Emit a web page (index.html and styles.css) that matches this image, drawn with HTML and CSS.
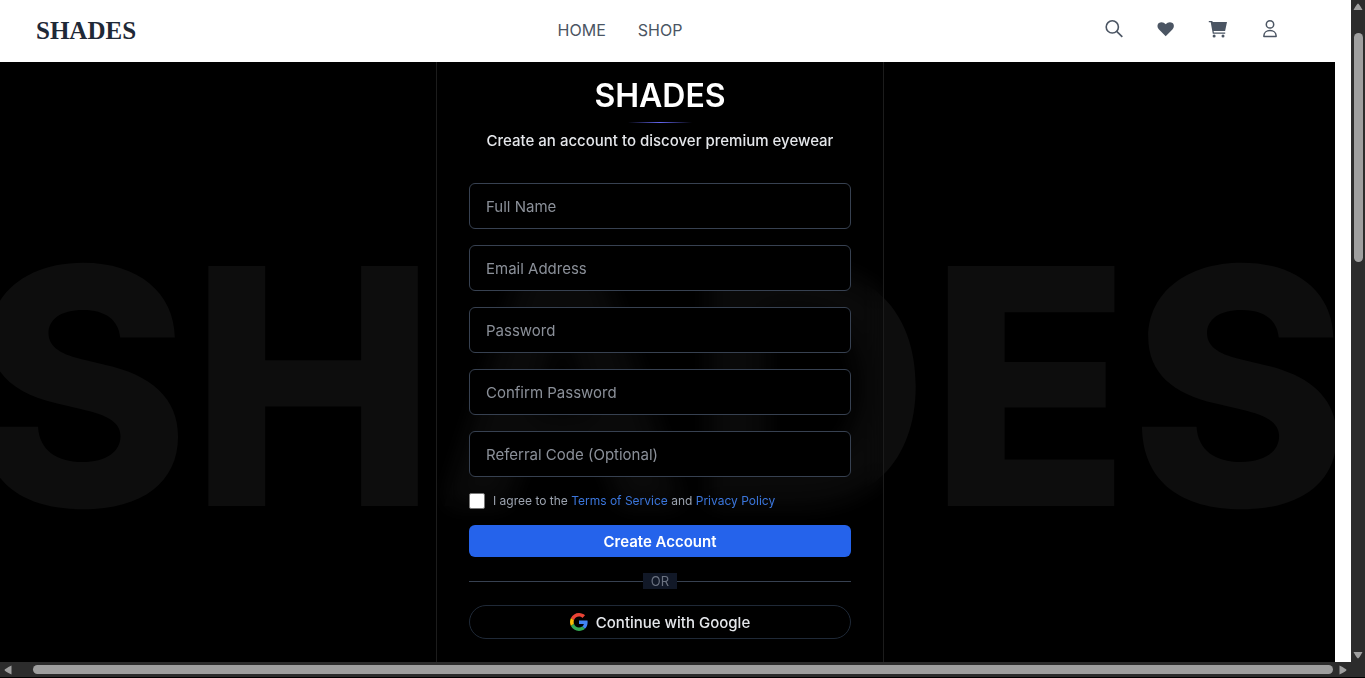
FILE: index.html
```html
<!DOCTYPE html>
<html lang="en">
<head>
<meta charset="utf-8">
<meta name="viewport" content="width=device-width, initial-scale=1">
<title>SHADES - Create Account</title>
<link rel="stylesheet" href="styles.css">
</head>
<body>
<div class="shell">
  <div class="page">
    <header class="nav">
      <a class="logo" href="#">SHADES</a>
      <nav class="nav-links">
        <a href="#">HOME</a>
        <a href="#">SHOP</a>
      </nav>
      <div class="nav-icons">
        <button type="button" aria-label="Search">
          <svg viewBox="0 0 20 20" fill="none" stroke="currentColor" stroke-width="1.6"><circle cx="8.300" cy="7.900" r="6.100"/><path d="M12.700 12.400l5.600 5.500"/></svg>
        </button>
        <a href="#" aria-label="Wishlist">
          <svg viewBox="0 0 20 20" fill="currentColor"><path d="M9.700 17.300l-6.700-6.700C.9 8.300 1.200 5.500 2.900 4.100 4.900 2.500 7.800 3 9.700 5.200c1.900-2.200 4.800-2.700 6.800-1.100 1.700 1.400 2 4.200-.1 6.500z"/></svg>
        </a>
        <a href="#" aria-label="Cart">
          <svg viewBox="0 0 20 20" fill="currentColor"><path d="M.8 2h3.500l.4 1h14.300l-1.900 9.100H5.600l.3 1.400h11.300v1.200H4.800L2.700 3.200H.8z"/><circle cx="6.100" cy="17" r="1.500"/><circle cx="15" cy="17" r="1.500"/></svg>
        </a>
        <a href="#" aria-label="Account">
          <svg viewBox="0 0 20 20" fill="none" stroke="currentColor" stroke-width="1.500"><circle cx="10" cy="5.400" r="3.700"/><path d="M3.900 17.500v-.8c0-3.100 2.600-5.100 6.100-5.100s6.100 2 6.100 5.100v.8z" stroke-linejoin="round"/></svg>
        </a>
      </div>
    </header>
    <main class="stage">
      <div class="watermark" aria-hidden="true">SHADES</div>
      <section class="card">
        <div class="heading">
          <h1>SHADES</h1>
          <div class="accent"></div>
          <p>Create an account to discover premium eyewear</p>
        </div>
        <form class="form">
          <input class="field" type="text" placeholder="Full Name" aria-label="Full Name">
          <input class="field" type="email" placeholder="Email Address" aria-label="Email Address">
          <input class="field" type="password" placeholder="Password" aria-label="Password">
          <input class="field" type="password" placeholder="Confirm Password" aria-label="Confirm Password">
          <input class="field" type="text" placeholder="Referral Code (Optional)" aria-label="Referral Code">
          <div class="terms">
            <input type="checkbox" id="agree">
            <label for="agree">I agree to the <a href="#">Terms of Service</a> and <a href="#">Privacy Policy</a></label>
          </div>
          <button class="submit" type="submit">Create Account</button>
          <div class="divider"><span>OR</span></div>
          <button class="google" type="button">
            <svg viewBox="0 0 48 48" aria-hidden="true"><path fill="#EA4335" d="M24 9.500c3.540 0 6.710 1.220 9.210 3.600l6.850-6.850C35.900 2.380 30.470 0 24 0 14.620 0 6.510 5.380 2.560 13.220l7.980 6.190C12.430 13.720 17.740 9.500 24 9.500z"/><path fill="#4285F4" d="M46.980 24.550c0-1.570-.15-3.090-.38-4.550H24v9.020h12.940c-.58 2.960-2.260 5.480-4.780 7.180l7.730 6c4.510-4.180 7.090-10.360 7.090-17.650z"/><path fill="#FBBC05" d="M10.530 28.590c-.48-1.450-.76-2.990-.76-4.590s.27-3.140.76-4.590l-7.980-6.190C.92 16.460 0 20.120 0 24s.92 7.540 2.560 10.780z"/><path fill="#34A853" d="M24 48c6.480 0 11.930-2.130 15.890-5.810l-7.730-6c-2.150 1.450-4.920 2.300-8.160 2.300-6.260 0-11.570-4.220-13.470-9.910l-7.980 6.190C6.510 42.620 14.620 48 24 48z"/></svg>
            Continue with Google
          </button>
        </form>
      </section>
    </main>
  </div>
  <div class="vbar" aria-hidden="true">
    <svg viewBox="0 0 10 8"><path d="M5 .5Q6 .5 9.500 7h-9Q4 .5 5 .5z"/></svg>
    <div class="vtrack"><div class="vthumb"></div></div>
    <svg viewBox="0 0 10 8"><path d="M5 7.500Q6 7.500 9.500 1h-9Q4 7.500 5 7.500z"/></svg>
  </div>
  <div class="hbar" aria-hidden="true">
    <svg viewBox="0 0 8 10"><path d="M.5 5Q.5 4 7.500.5v9Q.5 6 .5 5z"/></svg>
    <div class="hthumb"></div>
    <svg viewBox="0 0 8 10"><path d="M7.500 5Q7.500 4 .5.5v9Q7.500 6 7.500 5z"/></svg>
  </div>
</div>
</body>
</html>
```
FILE: styles.css
```css
* { box-sizing: border-box; }

body {
  margin: 0;
  background: #fff;
  font-family: Inter, "Liberation Sans", sans-serif;
}

a { color: inherit; text-decoration: none; }
button, input { font: inherit; margin: 0; }

.shell {
  display: grid;
  grid-template-columns: 1fr 14px;
  grid-template-rows: 1fr 16px;
  height: 100vh;
  overflow: hidden;
}

.page {
  display: flex;
  flex-direction: column;
  min-width: 0;
  min-height: 0;
  padding-right: 16px;
}

/* Navigation */
.nav {
  display: flex;
  align-items: center;
  justify-content: space-between;
  flex: none;
  height: 62px;
  padding: 0 55px 2px 36px;
  color: #4b5563;
}

.logo {
  padding-top: 2px;
  color: #1f2937;
  font-family: "Liberation Serif", serif;
  font-size: 25px;
  font-weight: 700;
}

.nav-links { display: flex; gap: 32px; font-size: 16px; }
.nav-icons { display: flex; gap: 32px; padding-bottom: 2px; }

.nav-icons a,
.nav-icons button {
  display: block;
  width: 20px;
  height: 20px;
  padding: 0;
  border: 0;
  background: none;
  color: inherit;
}

.nav-icons svg { display: block; width: 20px; height: 20px; }

/* Sign-up area */
.stage {
  position: relative;
  display: flex;
  justify-content: center;
  flex: 1;
  min-height: 0;
  padding-right: 15px;
  overflow: hidden;
  background: #000;
}

.watermark {
  position: absolute;
  inset: 0 15px 0 0;
  display: flex;
  align-items: center;
  justify-content: center;
  padding-top: 48px;
  color: #0d0d0d;
  font-size: 330px;
  font-weight: 800;
  line-height: 1;
}

.card {
  position: relative;
  width: 448px;
  padding: 16px 32px 0;
  border: solid #1c1c1c;
  border-width: 0 1px;
  background: rgba(0, 0, 0, 0.2);
  backdrop-filter: blur(12px);
}

.heading {
  display: flex;
  flex-direction: column;
  align-items: center;
  margin-bottom: 32px;
}

h1 {
  margin: 0;
  color: #fff;
  font-size: 32px;
  font-weight: 600;
  line-height: 36px;
}

.accent {
  width: 64px;
  height: 1px;
  margin: 8px 0;
  background: linear-gradient(to right, transparent, #6366f1, transparent);
}

.heading p {
  margin: 0;
  color: #e5e7eb;
  font-size: 15px;
  font-weight: 500;
  line-height: 20px;
}

.form { display: flex; flex-direction: column; gap: 16px; }

.field {
  width: 100%;
  height: 46px;
  padding: 0 16px;
  border: 1px solid #374151;
  border-radius: 6px;
  background: #000;
  color: #fff;
  font-size: 15px;
}

.field::placeholder { color: #8b9099; opacity: 1; }

.terms {
  display: flex;
  align-items: center;
  gap: 8px;
  color: #9ca3af;
  font-size: 12px;
  line-height: 16px;
}

.terms input {
  appearance: none;
  width: 16px;
  height: 16px;
  border: 1px solid #767676;
  border-radius: 2px;
  background: #fff;
}

.terms a { color: #3b76dc; }

.submit {
  height: 32px;
  padding: 0;
  border: 0;
  border-radius: 6px;
  background: #2563eb;
  color: #fff;
  font-size: 15px;
  font-weight: 600;
}

.divider {
  display: flex;
  align-items: center;
  color: #6b7280;
  font-size: 13px;
  line-height: 16px;
}

.divider::before,
.divider::after {
  content: "";
  flex: 1;
  height: 1px;
  background: #374151;
}

.divider span { padding: 0 8px; background: #111827; }

.google {
  display: flex;
  align-items: center;
  justify-content: center;
  gap: 8px;
  height: 34px;
  padding: 0;
  border: 1px solid #1f2937;
  border-radius: 17px;
  background: #000;
  color: #e5e7eb;
  font-size: 15px;
  font-weight: 500;
}

.google svg { width: 18px; height: 18px; }

/* Scroll bars */
.vbar,
.hbar { display: flex; align-items: center; background: #2c2c2c; }

.vbar { flex-direction: column; padding: 3px 0; }
.vbar svg { width: 10px; height: 8px; fill: #9f9f9f; }
.hbar svg { width: 8px; height: 10px; fill: #9f9f9f; }
.vtrack { flex: 1; padding: 22px 0 0; }
.vthumb { width: 9px; height: 37%; border-radius: 5px; background: #9f9f9f; }

.hbar {
  grid-column: 1 / -1;
  padding: 0 18px 0 4px;
  border-bottom: 1px solid #000;
}

.hthumb {
  flex: 1;
  height: 9px;
  margin: 0 6px 0 21px;
  border-radius: 5px;
  background: #9f9f9f;
}
```
